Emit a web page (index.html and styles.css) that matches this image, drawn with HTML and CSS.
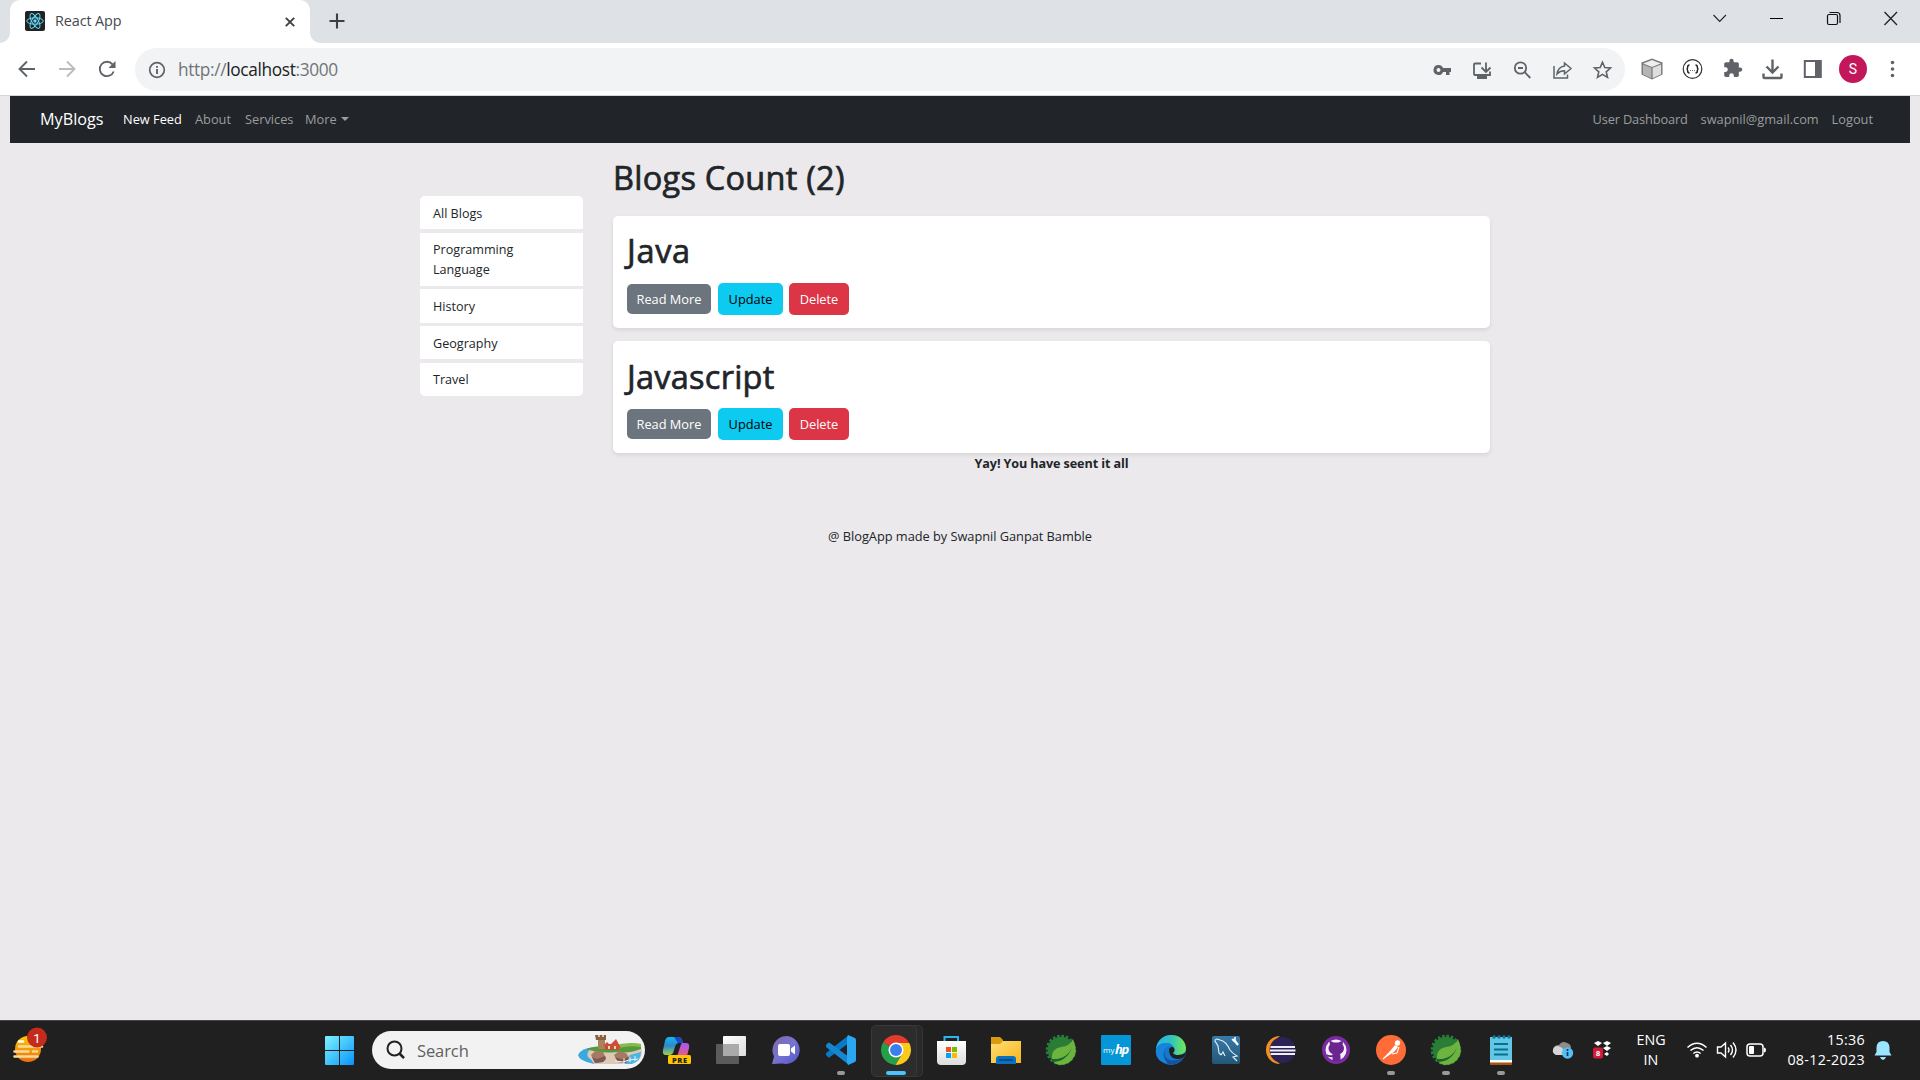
FILE: index.html
```html
<!DOCTYPE html>
<html lang="en">
<head>
<meta charset="utf-8">
<title>React App</title>
<link rel="stylesheet" href="styles.css">
</head>
<body>
<div class="screen">
  <header class="tabstrip">
    <div class="tab">
      <svg class="favicon" width="20" height="20" viewBox="0 0 20 20"><rect width="20" height="20" rx="2" fill="#222"/><g fill="none" stroke="#61dafb" stroke-width="1"><ellipse cx="10" cy="10" rx="8.3" ry="3.2"/><ellipse cx="10" cy="10" rx="8.3" ry="3.2" transform="rotate(60 10 10)"/><ellipse cx="10" cy="10" rx="8.3" ry="3.2" transform="rotate(120 10 10)"/></g><circle cx="10" cy="10" r="1.7" fill="#61dafb"/></svg>
      <span class="tab-title">React App</span>
      <svg class="tab-close" width="10" height="10" viewBox="0 0 10 10"><path d="M.8.8l8.4 8.4M9.2.8L.8 9.2" stroke="#3c4043" stroke-width="1.9"/></svg>
    </div>
    <svg class="new-tab" width="16" height="16" viewBox="0 0 16 16"><path d="M8 .5v15M.5 8h15" stroke="#3c4043" stroke-width="2.1"/></svg>
    <div class="window-controls">
      <svg width="57" height="36" viewBox="0 0 57 36"><path d="M22.500 15l6.200 6.500 6.200-6.500" fill="none" stroke="#222" stroke-width="1.100"/></svg>
      <svg width="57" height="36" viewBox="0 0 57 36"><path d="M22 18.500h13" stroke="#000"/></svg>
      <svg width="57" height="36" viewBox="0 0 57 36"><g fill="none" stroke="#111" stroke-width="1.200"><rect x="22.500" y="14.500" width="10" height="10" rx="1.500"/><path d="M24.500 12.500h7.500q3 0 3 3v7.500"/></g></svg>
      <svg width="57" height="36" viewBox="0 0 57 36"><path d="M22.500 12l12.500 13M35 12L22.500 25" stroke="#222" stroke-width="1.300"/></svg>
    </div>
  </header>

  <div class="toolbar">
    <div class="nav-buttons">
      <svg width="40" height="24" viewBox="0 0 40 24"><path d="M28 12H13M20 4.500L12.500 12l7.500 7.500" fill="none" stroke="#5f6368" stroke-width="1.900"/></svg>
      <svg width="40" height="24" viewBox="0 0 40 24"><path d="M12 12h15M20 4.500l7.500 7.500-7.500 7.500" fill="none" stroke="#babcbe" stroke-width="1.900"/></svg>
      <svg width="40" height="24" viewBox="0 0 40 24"><path d="M26.700 14.500a7.200 7.200 0 1 1-1.200-7.200" fill="none" stroke="#5f6368" stroke-width="1.900"/><path d="M28.500 4v7h-7z" fill="#5f6368"/></svg>
    </div>
    <div class="omnibox">
      <svg class="info" width="18" height="18" viewBox="0 0 18 18"><circle cx="9" cy="9" r="7.300" fill="none" stroke="#5f6368" stroke-width="1.700"/><path d="M9 8v5M9 5v1.800" stroke="#5f6368" stroke-width="1.900"/></svg>
      <span class="url">http://<b>localhost</b>:3000</span>
      <div class="omni-icons">
        <svg width="40" height="24" viewBox="0 0 40 24"><path fill="#5f6368" fill-rule="evenodd" d="M16.500 7a5 5 0 1 0 4.600 7H24v3h3.500v-3H29v-4h-7.900A5 5 0 0 0 16.500 7zm0 3a2 2 0 1 1 0 4 2 2 0 0 1 0-4z"/></svg>
        <svg width="40" height="24" viewBox="0 0 40 24"><g fill="none" stroke="#5f6368" stroke-width="1.800"><path d="M19 5.500h-6q-1 0-1 1V16q0 1 1 1h15v-3.500M24 4.500v9M19.500 9.500l4.500 4.500 4.500-4.500"/></g><path d="M15 18h10v3H15z" fill="#5f6368"/></svg>
        <svg width="40" height="24" viewBox="0 0 40 24"><g fill="none" stroke="#5f6368" stroke-width="1.800"><circle cx="18.500" cy="10" r="5.700"/><path d="M22.700 14.200l5.600 5.800M16 10h5"/></g></svg>
        <svg width="40" height="24" viewBox="0 0 40 24"><g fill="none" stroke="#5f6368" stroke-width="1.500"><path d="M12 8v12h13.500v-3.500M22.500 5l6.500 5.500-6.500 5.500v-3.200q-4.500 0-7.500 3.200 1-7 7.500-8z"/></g></svg>
        <svg width="40" height="24" viewBox="0 0 40 24"><path d="M20.500 4.300l2.300 5.200 5.700.5-4.300 3.800 1.300 5.600-5-3-5 3 1.300-5.600-4.300-3.800 5.700-.5z" fill="none" stroke="#5f6368" stroke-width="1.600"/></svg>
      </div>
    </div>
    <div class="extensions">
      <svg width="40" height="30" viewBox="0 0 40 30"><path d="M20 4.500l10.500 4v12L20 25.500 9.500 20.500v-12z" fill="#777"/><path d="M20 6l8.800 3.500L20 13l-8.800-3.500z" fill="#eee"/><path d="M10.900 10.500l8.500 3.300v10.500l-8.500-4z" fill="#b5b5b5"/><path d="M20.600 13.800l8.500-3.300v9.800l-8.500 4z" fill="#dedede"/></svg>
      <svg width="40" height="30" viewBox="0 0 40 30"><circle cx="20.500" cy="15" r="9.300" fill="#fff" stroke="#333" stroke-width="1.200"/><path d="M17.500 11q-1.800 0-1.800 2t-1.200 2q1.200 0 1.200 2t1.800 2M23.500 11q1.800 0 1.800 2t1.200 2q-1.200 0-1.200 2t-1.800 2" fill="none" stroke="#222" stroke-width="1.500"/><path d="M18 16.500h5" stroke="#777" stroke-dasharray="1 1"/></svg>
      <svg width="40" height="30" viewBox="0 0 40 30"><path transform="translate(10.500 4) scale(.86)" d="M20.500 11H19V7c0-1.100-.9-2-2-2h-4V3.500a2.500 2.500 0 0 0-5 0V5H4c-1.100 0-2 .9-2 2v3.800h1.500a2.700 2.700 0 0 1 0 5.400H2V20c0 1.100.9 2 2 2h3.800v-1.500a2.700 2.700 0 0 1 5.400 0V22H17c1.100 0 2-.9 2-2v-4h1.500a2.500 2.500 0 0 0 0-5z" fill="#5f6368"/></svg>
      <svg width="40" height="30" viewBox="0 0 40 30"><path d="M20.500 5.500v12M14.500 12.500l6 6 6-6M11.500 19.500V23q0 1 1 1h16q1 0 1-1v-3.500" fill="none" stroke="#5f6368" stroke-width="2.400"/></svg>
      <svg width="40" height="30" viewBox="0 0 40 30"><rect x="12.800" y="7" width="16" height="16" fill="none" stroke="#5f6368" stroke-width="2"/><path d="M23 7h6v16h-6z" fill="#5f6368"/></svg>
      <span class="avatar">S</span>
      <svg width="36" height="30" viewBox="0 0 36 30"><g fill="#5f6368"><circle cx="18.500" cy="8.500" r="1.800"/><circle cx="18.500" cy="15" r="1.800"/><circle cx="18.500" cy="21.500" r="1.800"/></g></svg>
    </div>
  </div>

  <main class="page">
    <nav class="navbar">
      <span class="brand">MyBlogs</span>
      <span class="link active feed">New Feed</span>
      <span class="link about">About</span>
      <span class="link services">Services</span>
      <span class="link more">More</span>
      <div class="account">
        <span class="link dashboard">User Dashboard</span>
        <span class="link email">swapnil@gmail.com</span>
        <span class="link logout">Logout</span>
      </div>
    </nav>
    <div class="content">
      <ul class="categories">
        <li>All Blogs</li>
        <li class="two-line">Programming Language</li>
        <li>History</li>
        <li>Geography</li>
        <li>Travel</li>
      </ul>
      <section class="feed-list">
        <h1 class="count">Blogs Count (2)</h1>
        <article class="card">
          <h1 class="java">Java</h1>
          <div class="actions"><span class="btn read">Read More</span><span class="btn update">Update</span><span class="btn delete">Delete</span></div>
        </article>
        <article class="card">
          <h1 class="javascript">Javascript</h1>
          <div class="actions"><span class="btn read">Read More</span><span class="btn update">Update</span><span class="btn delete">Delete</span></div>
        </article>
        <p class="end">Yay! You have seent it all</p>
      </section>
    </div>
    <footer class="credits">@ BlogApp made by Swapnil Ganpat Bamble</footer>
  </main>

  <footer class="taskbar">
    <svg class="weather" width="40" height="44" viewBox="0 0 40 44"><defs><linearGradient id="sun" x2="0" y2="1"><stop stop-color="#ffc800"/><stop offset="1" stop-color="#ee6c10"/></linearGradient></defs><circle cx="18" cy="22" r="13" fill="url(#sun)"/><g stroke="#f6dc9c" stroke-width="2.600" stroke-linecap="round"><path d="M9 14.500h4" stroke="#fff"/><path d="M9 19.500h23M4.500 24.500h14M23 24.500h4M4.500 29.500h23"/></g><circle cx="27" cy="10.500" r="10" fill="#c42b1c"/><text class="badge-text" x="27" y="15.500" text-anchor="middle">1</text></svg>
    <svg class="start" width="29" height="29" viewBox="0 0 29 29"><defs><linearGradient id="win" gradientUnits="userSpaceOnUse" x1="0" y1="0" x2="29" y2="29"><stop stop-color="#7df3ff"/><stop offset="1" stop-color="#0794fa"/></linearGradient></defs><path d="M1 0h13v14H0V1q0-1 1-1zM15 0h13q1 0 1 1v13H15zM0 15h14v14H1q-1 0-1-1zM15 15h14v13q0 1-1 1H15z" fill="url(#win)"/></svg>
    <div class="search">
      <svg class="lens" width="20" height="20" viewBox="0 0 20 20"><circle cx="8.500" cy="8.500" r="7" fill="none" stroke="#222" stroke-width="2"/><path d="M13.500 13.500l4.500 4.700" stroke="#222" stroke-width="2.600"/></svg>
      <span class="search-label">Search</span>
      <svg class="castle" width="66" height="32" viewBox="0 0 66 32"><path d="M18 13Q4 14 1 21q1 6 16 9l8-3z" fill="#39a9df"/><path d="M14 15q18-5 50-3l1 6q0 9-11 12H17q-1-3-6-7-2-5 3-8z" fill="#ddc9b5"/><path d="M64 18l-11 3-6 9h8q9-3 9-12z" fill="#4bb5e4"/><path d="M9 15q8-3 20-3l12 1q8-5 23-3v5q-13 5-24 3-16 2-31-3z" fill="#55983d"/><path d="M36 12q14-5 28-2v3q-15-2-23 2z" fill="#86bd48"/><path d="M21 5h7v10h-7z" fill="#a98259"/><path d="M18 1h11v5H19z" fill="#866143"/><path d="M21 1h2v2h-2zM25 1h2v2h-2z" fill="#d5bf9f"/><path d="M28 10h14v6H28z" fill="#b7523d"/><path d="M26 12l4-4 3 3 6-6 5 9z" fill="#d34c37"/><path d="M31 12h2v3h-2M37 12h2v3h-2" fill="#ecd7a9"/><path d="M14 21l4-4 8 1 3 6-3 4-8 1zM37 21l5-4 7 2 4 6-4 4-8-1z" fill="#a87964"/><path d="M15 23l5 2 8-3 1 3-3 3-8 1zM38 23l6 2 8-2-3 6-8-1z" fill="#7d5953"/><path d="M38 27l8 1 6-2 9-1M47 24v6M53 23v5M58 22v5" fill="none" stroke="#e9f6f7"/></svg>
    </div>

    <div class="apps">
      <div class="app"><svg width="32" height="32" viewBox="0 0 32 32"><defs><linearGradient id="cpa" x2="0" y2="1"><stop stop-color="#16b5f2"/><stop offset=".5" stop-color="#2d89ca"/><stop offset="1" stop-color="#9fd34b"/></linearGradient><linearGradient id="cpb" x2="0" y2="1"><stop stop-color="#a259ee"/><stop offset="1" stop-color="#ed598b"/></linearGradient></defs><path d="M9 3h9q3 0 4 3l1 3h-4q-3 0-4 4l-2 6q-1 2-4 2H6q-4 0-3-5l2-9q1-4 4-4z" fill="url(#cpa)"/><path d="M14 3h4q3 0 4 3l1 3h-5z" fill="#174ac5"/><path d="M20 9h6q4 0 3 5l-2 8H15l3-9 2-4z" fill="url(#cpb)"/><path d="M15.500 13l3-4h3l-4 12h-4z" fill="#202020"/><rect x="8" y="21" width="23" height="9" rx="1.500" fill="#ffc600"/><text class="pre" x="19.800" y="28.600" text-anchor="middle">PRE</text></svg></div>
      <div class="app"><svg width="32" height="32" viewBox="0 0 32 32"><defs><linearGradient id="tv" x2="1" y2="1"><stop stop-color="#fff"/><stop offset="1" stop-color="#ddd"/></linearGradient></defs><rect x="8" y="2" width="23" height="20" rx="1" fill="url(#tv)"/><rect x="1" y="10" width="23" height="20" rx="1" fill="#666" opacity=".85"/><path d="M8 10h16v12H8z" fill="#aaa"/></svg></div>
      <div class="app"><svg width="32" height="32" viewBox="0 0 32 32"><defs><linearGradient id="chat" x2="1" y2="1"><stop stop-color="#8364a8"/><stop offset=".5" stop-color="#7774d0"/><stop offset="1" stop-color="#4f55cb"/></linearGradient></defs><path d="M16 2a14 14 0 1 1-4 27.500L2 30l2-7.500A14 14 0 0 1 16 2z" fill="url(#chat)"/><rect x="8" y="10" width="12" height="12" rx="2" fill="#fff"/><path d="M21 14.500l4-3v9l-4-3z" fill="#fff"/></svg></div>
      <div class="app running"><svg width="32" height="32" viewBox="0 0 32 32"><path d="M24 1v8L5 23q-1 1-2 0l-2-2v-2z" fill="#0879c4"/><path d="M24 31v-8L5 9Q4 8 3 9l-2 2v2z" fill="#1686d0"/><path d="M23 1l7 3q1 1 1 2v20q0 1-1 2l-7 3q-1-2-1-4V5q0-3 1-4z" fill="#29a7f1"/></svg></div>
      <div class="app current"><svg width="32" height="32" viewBox="0 0 32 32"><path d="M16 16L3 8.500a15 15 0 0 1 26 0z" fill="#e33b2e"/><path d="M16 16L3 8.500A15 15 0 0 0 15.500 31L22 20z" fill="#25a04a"/><path d="M16 9h13.300A15 15 0 0 1 15.500 31L22 20z" fill="#fcca1d"/><circle cx="16" cy="16" r="7.500" fill="#fff"/><circle cx="16" cy="16" r="6" fill="#3b7eee"/></svg></div>
      <div class="app"><svg width="32" height="32" viewBox="0 0 32 32"><defs><linearGradient id="bag" x2="0" y2="1"><stop stop-color="#fff"/><stop offset="1" stop-color="#ddd"/></linearGradient></defs><path d="M9.500 8V3h13.500v5" fill="none" stroke="#29b5ed" stroke-width="2"/><path d="M2 7h29v20q0 4-4 4H6q-4 0-4-4z" fill="url(#bag)"/><path d="M11 13h5v5h-5z" fill="#f25022"/><path d="M17 13h5v5h-5z" fill="#7fba00"/><path d="M11 19h5v5h-5z" fill="#00a4ef"/><path d="M17 19h5v5h-5z" fill="#ffb900"/></svg></div>
      <div class="app"><svg width="32" height="32" viewBox="0 0 32 32"><defs><linearGradient id="folder" x2="1" y2="1"><stop stop-color="#ffdf72"/><stop offset="1" stop-color="#f7b51e"/></linearGradient></defs><path d="M1 3h9l3 3v6H1z" fill="#d99b10"/><path d="M13 7h18v22H1V10h9z" fill="url(#folder)"/><path d="M6 30v-5q0-3 3-3h14q3 0 3 3v5z" fill="#0b70c0"/><path d="M9 26h14" stroke="#084d8a" stroke-width="2"/></svg></div>
      <div class="app"><svg width="32" height="32" viewBox="0 0 32 32"><circle cx="16" cy="16" r="13.300" fill="#2b7d35"/><circle cx="16" cy="16" r="14" fill="none" stroke="#23803a" stroke-width="2.600" stroke-dasharray="2.600 1.800"/><path d="M28 5q5 12 1 18-5 8-14 8-7-1-8-7-1-9 9-11 9-1 12-8z" fill="#6db33f"/><path d="M7 25q15 1 20-12-5 15-20 15z" fill="#1e632d"/></svg></div>
      <div class="app"><svg width="32" height="32" viewBox="0 0 32 32"><rect x="1" y="1" width="30" height="30" rx="1" fill="#0496d6"/><text class="my" x="3" y="19">my</text><text class="hp" x="15" y="20">hp</text></svg></div>
      <div class="app"><svg width="32" height="32" viewBox="0 0 32 32"><defs><linearGradient id="edge" x2="1"><stop stop-color="#25b6e6"/><stop offset=".5" stop-color="#2fc2bf"/><stop offset="1" stop-color="#75ea50"/></linearGradient></defs><circle cx="16" cy="16" r="15" fill="#1379ce"/><path d="M1 15C3-4 30-3 31 14q0 7-8 7-4 0-5-2 3-2 1-5-2-5-8-5Q4 9 1 15z" fill="url(#edge)"/><path d="M12 12q-4 3-2 10 4 8 18 2-6 9-17 6-5-5-4-12 1-4 5-6z" fill="#1752a1"/><path d="M1 15Q4 8 12 9q5 1 6 4-5-2-8 2-4 6 3 15Q-1 27 1 15z" fill="#1685d9"/><path d="M14 16q0-3 4-3 3 2 0 6 1 2 5 2 5 0 8-3-1 4-3 6-6 2-10 0-4-3-4-8z" fill="#202020"/></svg></div>
      <div class="app"><svg width="32" height="32" viewBox="0 0 32 32"><defs><linearGradient id="sql" x2="0" y2="1"><stop stop-color="#397aaa"/><stop offset="1" stop-color="#225777"/></linearGradient></defs><rect x="2" y="2" width="28" height="28" rx="2" fill="url(#sql)"/><path d="M11 21l-2-2-1-7-3-5q0-3 5-1 6 1 10 10 2 3 7 6l-4 1 4 4M11 21l2-3 2 4" fill="none" stroke="#d9edf5" stroke-width="1.200"/><path d="M23 5.500l2 1.500 3 4" stroke="#fff" stroke-width="2.200" fill="none"/><path d="M22 5l3 3M25 3v4" stroke="#fff" stroke-width="1.500"/></svg></div>
      <div class="app"><svg width="32" height="32" viewBox="0 0 32 32"><path d="M15 2a14 14 0 0 0 0 28A17 17 0 0 1 15 2z" fill="#f4911e"/><circle cx="17.500" cy="16" r="13" fill="#2c2255"/><g fill="#eeeef7"><path d="M5.500 12h24.500v2H5.500zM5 15.500h25.500v2H5zM5.500 19h24.500v2H5.500z"/></g></svg></div>
      <div class="app"><svg width="32" height="32" viewBox="0 0 32 32"><circle cx="16" cy="16" r="14" fill="#7b2ba1"/><circle cx="16" cy="16" r="10.500" fill="#f5f0f8"/><path d="M12.500 27v-4q-5 1-6-3 3 2 6 1v-1q-4-2-4-6 0-2 1.500-3.500-1-2 0-3.500 2 0 3.500 1.500h5q2-1.500 4-1.500 1 2 0 3.500 1.500 1.500 1.500 3.500 0 4-4 6 .5 1 .5 3v4z" fill="#6c248f"/></svg></div>
      <div class="app running"><svg width="32" height="32" viewBox="0 0 32 32"><circle cx="16" cy="16" r="15" fill="#ff6c37"/><circle cx="22.500" cy="9" r="2.700" fill="#fff"/><path d="M20 11l3 2-4 5-11 7 8-9z" fill="#fff"/><path d="M8 25l14-13M17 20l5-1 2-6" fill="none" stroke="#fff" stroke-width="1.100"/></svg></div>
      <div class="app running"><svg width="32" height="32" viewBox="0 0 32 32"><circle cx="16" cy="16" r="13.300" fill="#2b7d35"/><circle cx="16" cy="16" r="14" fill="none" stroke="#23803a" stroke-width="2.600" stroke-dasharray="2.600 1.800"/><path d="M28 5q5 12 1 18-5 8-14 8-7-1-8-7-1-9 9-11 9-1 12-8z" fill="#6db33f"/><path d="M7 25q15 1 20-12-5 15-20 15z" fill="#1e632d"/></svg></div>
      <div class="app running"><svg width="32" height="32" viewBox="0 0 32 32"><path d="M5 3h22v24H5z" fill="#63c6e5"/><path d="M5 26h22v3H5z" fill="#fff"/><path d="M5 28.500h22V31H5z" fill="#a4550e"/><path d="M9 10h14M9 15.500h14M9 20.500h14" stroke="#05718e" stroke-width="2"/><g fill="#087b9c"><circle cx="9" cy="3" r="1.700"/><circle cx="14" cy="3" r="1.700"/><circle cx="19" cy="3" r="1.700"/><circle cx="24" cy="3" r="1.700"/></g></svg></div>
    </div>

    <div class="tray">
      <svg class="cloud" width="22" height="20" viewBox="0 0 22 20"><path d="M5 14q-5-1-4-5 1-4 6-4 3-5 8-2 4 1 4 5z" fill="#8c8c8c"/><path d="M4 15q-4-2-3-5 1-4 5-4 4 1 6 4l3 5z" fill="#d5d5d5"/><circle cx="15.500" cy="13" r="5.700" fill="#55bff5"/><path d="M15.500 12v4M15.500 9v2" stroke="#123e5b" stroke-width="1.700"/></svg>
      <svg class="dropbox" width="20" height="20" viewBox="0 0 20 20"><path d="M2 3l4-2 4 2-4 3zM11 3l4-2 4 2-4 3zM11 8l4-2 4 2-4 3zM12 14l3-2 2 2-2 2z" fill="#fff"/><rect x="1" y="7.500" width="10" height="11" rx="2" fill="#d51738"/><text class="count-badge" x="6" y="16" text-anchor="middle">8</text></svg>
      <div class="language"><span>ENG</span><span>IN</span></div>
      <svg class="wifi" width="22" height="18" viewBox="0 0 22 18"><g fill="none" stroke="#fff" stroke-width="1.600"><path d="M1.500 6.500Q11-2 20.500 6.500M4.500 9.500q6.500-5.500 13 0M7.300 12.500q3.700-3 7.400 0"/></g><circle cx="11" cy="14.700" r="1.900" fill="#fff"/></svg>
      <svg class="sound" width="22" height="18" viewBox="0 0 22 18"><g fill="none" stroke="#fff" stroke-width="1.400"><path d="M1.500 6h3.500l4.500-4v14L5 12H1.500zM12 6.500q2 2.500 0 5M14.500 4q4 5 0 10M17 1.500q6 7.500 0 15"/></g></svg>
      <svg class="battery" width="21" height="14" viewBox="0 0 21 14"><rect x="1" y="1" width="16" height="12" rx="3" fill="none" stroke="#fff" stroke-width="1.500"/><rect x="3" y="3" width="5" height="8" rx="1" fill="#fff"/><path d="M18 4.500q2 0 2 2.500t-2 2.500" fill="#fff"/></svg>
      <div class="clock"><span class="time">15:36</span><span class="date">08-12-2023</span></div>
      <svg class="bell" width="18" height="20" viewBox="0 0 18 20"><path d="M9 1q6 0 6.500 6v5l2 3.500H.5l2-3.500V7Q3 1 9 1zM6 17h6q-1 3-3 3t-3-3z" fill="#9ae5ff"/></svg>
    </div>
  </footer>
</div>
</body>
</html>
```
FILE: styles.css
```css
* { box-sizing: border-box; }
body { margin: 0; font-family: "Open Sans", "Noto Sans", sans-serif; color: #212529; }
svg { display: block; flex: none; }
.screen { width: 1920px; height: 1080px; display: flex; flex-direction: column; overflow: hidden; }
span { white-space: nowrap; }

/* Browser window */
.tabstrip { height: 43px; background: #dee1e6; display: flex; padding-left: 10px; }
.tab { position: relative; width: 300px; background: #fff; border-radius: 10px 10px 0 0; display: flex; align-items: center; padding: 0 15px; }
.tab::before, .tab::after { content: ""; position: absolute; bottom: 0; width: 10px; height: 10px; }
.tab::before { left: -10px; background: radial-gradient(circle at 0 0, #dee1e6 9.5px, #fff 10px); }
.tab::after { right: -10px; background: radial-gradient(circle at 100% 0, #dee1e6 9.5px, #fff 10px); }
.tab-title { margin: 0 0 2px 10px; font-size: 14.4px; color: #45494d; letter-spacing: -.1px; }
.favicon { margin-bottom: 1px; }
.tab-close { margin-left: auto; }
.new-tab { margin: 13px 0 0 19px; }
.window-controls { display: flex; margin-left: auto; padding-right: 1px; }
.toolbar { height: 53px; background: #fff; border-bottom: 1px solid #d7d7da; display: flex; padding-top: 5px; }
.nav-buttons { display: flex; padding: 9px 0 0 7px; width: 135px; }
.omnibox { width: 1490px; height: 43px; border-radius: 22px; background: #f1f3f4; display: flex; align-items: center; padding: 0 3px 0 13px; }
.url { margin-left: 12px; font-size: 17.3px; color: #70757a; letter-spacing: -.35px; }
.url b { font-weight: 400; color: #202124; }
.omni-icons { display: flex; margin-left: auto; }
.extensions { display: flex; padding: 6px 0 0 7px; }
.avatar { width: 28px; height: 28px; border-radius: 50%; background: #c2185b; color: #fff; font: 14px/28px Roboto, sans-serif; text-align: center; margin: 1px 7px 0 7px; }

/* Web page */
.page { height: 924px; background: #ebe9eb; padding: 0 10px; }
.navbar { height: 47px; background: #212529; display: flex; align-items: center; padding: 0 37px 2px 30px; }
.navbar span { line-height: 24px; }
.brand { width: 83px; font-size: 16.2px; color: #fff; }
.link { font-size: 12.8px; color: #9b9d9e; }
.active { color: #fff; }
.feed { width: 72px; }
.about { width: 50px; }
.services { width: 60px; }
.more::after { content: ""; display: inline-block; margin-left: 4px; vertical-align: 3px; border: 4px solid transparent; border-top-color: #9b9d9e; border-bottom: 0; }
.account { display: flex; margin-left: auto; }
.dashboard { width: 108px; letter-spacing: -.15px; }
.email { width: 131px; }
.content { display: flex; gap: 30px; padding-left: 410px; height: 370px; }
.categories { list-style: none; width: 163px; margin: 53px 0 0; padding: 0; display: flex; flex-direction: column; gap: 3.5px; font-size: 12.6px; line-height: 20px; }
.categories li { height: 33.3px; padding: 7.5px 60px 5.500px 13px; background: #fff; white-space: nowrap; }
.categories .two-line { height: 53px; white-space: normal; }
.categories li:first-child { border-radius: 5px 5px 0 0; }
.categories li:last-child { border-radius: 0 0 5px 5px; }
.feed-list { width: 877px; padding-top: 13px; }
h1 { margin: 0; font-size: 32.500px; line-height: 40px; font-weight: 500; letter-spacing: .25px; -webkit-text-stroke: .7px #212529; }
.count { height: 60px; padding-top: 2px; }
.card { height: 112px; margin-bottom: 13px; background: #fff; border-radius: 5px; padding: 15px 14px; box-shadow: 0 2px 4px rgba(0,0,0,.09); }
.card h1 { height: 52px; }
.card .java { letter-spacing: .7px; }
.card .javascript { padding-top: 1px; }
.actions { display: flex; align-items: center; }
.btn { height: 32px; line-height: 32px; border-radius: 5px; color: #fff; font-size: 12.8px; text-align: center; }
.read { width: 84px; height: 30px; line-height: 30px; background: #6c757d; margin-right: 7px; }
.update { width: 65px; background: #0dcaf0; color: #000; margin-right: 6px; }
.delete { width: 60px; background: #dc3545; }
.end { margin: -12px 0 0; text-align: center; font-size: 12.6px; line-height: 20px; font-weight: 700; letter-spacing: -.1px; }
.credits { text-align: center; font-size: 12.8px; line-height: 20px; margin-top: 13px; letter-spacing: -.03px; }

/* Taskbar */
.taskbar { height: 60px; background: #202020; border-top: 1px solid #444; display: flex; align-items: center; color: #fff; padding-bottom: 1px; }
.weather { margin: -2px 0 0 10px; }
.badge-text { font: 13px Roboto, sans-serif; fill: #fff; }
.start { margin-left: 275px; }
.search { width: 273px; height: 38px; margin-left: 18px; border-radius: 19px; background: #f2f2f2; display: flex; align-items: center; padding: 0 2px 0 14px; }
.search-label { margin-left: 11px; font-size: 16.500px; color: #606060; letter-spacing: -.1px; }
.castle { margin-left: auto; }
.apps { display: flex; margin-left: 3px; }
.app { position: relative; width: 55px; height: 50px; display: flex; align-items: center; justify-content: center; }
.app svg { position: relative; }
.running::after { content: ""; position: absolute; bottom: 0; left: 24px; width: 8px; height: 4px; border-radius: 2px; background: #999; }
.current::before { content: ""; position: absolute; left: 3px; top: 0; width: 44px; height: 50px; border-radius: 5px; background: #2c2c2c; border: 1px solid #393939; box-shadow: 6px 0 0 -1px #292929, 6px 0 0 #353535; }
.current::after { content: ""; position: absolute; bottom: 0; left: 18px; width: 20px; height: 4px; border-radius: 2px; background: #4cc2ff; }
.pre { font: 800 7.500px "Open Sans", sans-serif; letter-spacing: .5px; fill: #222; }
.my { font: 8px "Open Sans", sans-serif; fill: #fff; }
.hp { font: italic 700 13px "Open Sans", sans-serif; fill: #fff; letter-spacing: -1.300px; }
.tray { display: flex; align-items: center; margin-left: 24px; font-size: 14.300px; line-height: 20px; }
.dropbox { margin-left: 18px; }
.count-badge { font: 700 8px Roboto, sans-serif; fill: #fff; }
.language { width: 50px; margin: -1px 0 0 14px; display: flex; flex-direction: column; align-items: center; }
.wifi { margin-left: 10px; }
.sound { margin-left: 8px; }
.battery { margin-left: 8px; }
.clock { width: 98px; margin-top: -1px; letter-spacing: .3px; display: flex; flex-direction: column; align-items: flex-end; }
.bell { margin-left: 9px; }
```
